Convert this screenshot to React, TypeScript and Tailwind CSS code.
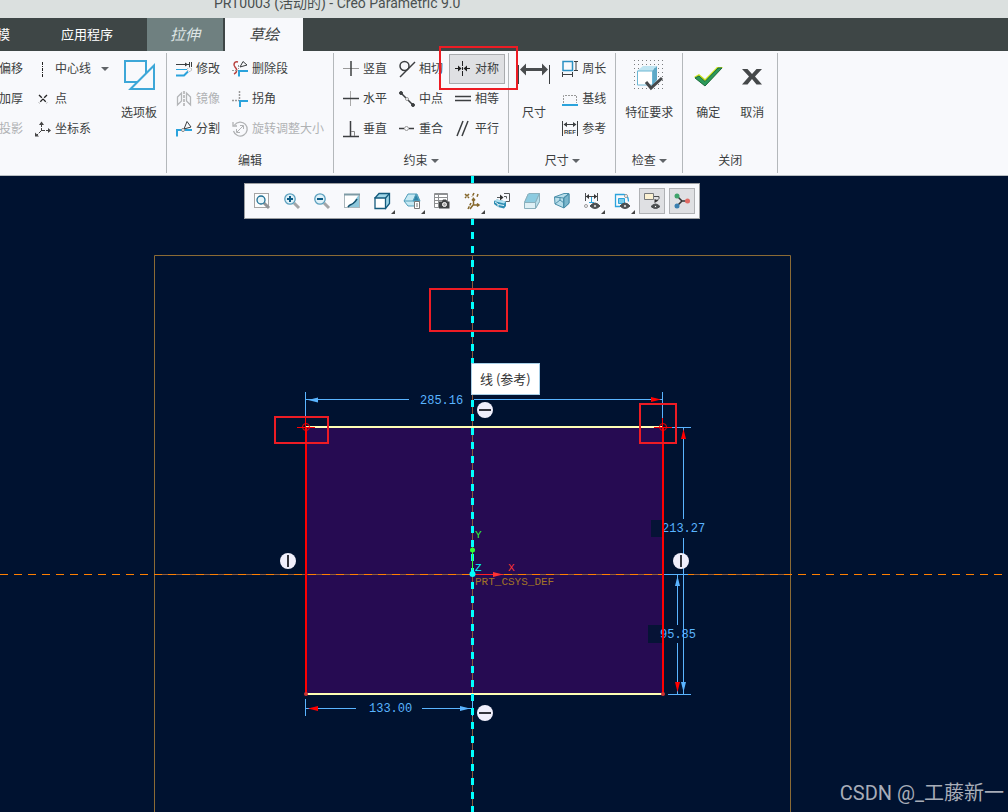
import { Fragment } from "react";
import type { ReactNode } from "react";

const INK = "#3c3f41";
const BLUE = "#2ba3dc";
const STEEL = "#1f6f94";
const DIM = "#5ab4ff";

const icons: Record<string, ReactNode> = {
  centerline: <path d="M7.500 1v15" stroke="#222" strokeDasharray="3 1 1 1" />,
  point: (
    <g stroke="#222">
      <path d="M4 4l8 8M12 4l-8 8" strokeWidth="1.300" strokeDasharray="4 1.500" />
    </g>
  ),
  csys: (
    <g stroke="#444">
      <path d="M6.500 3v7M7 9.500h6M6 10l-4 4" strokeDasharray="3 1" />
      <path d="M4 4l2.500-3.500L9 4zM13 7l3 2.500-3 2.500zM0 11.500v4h4z" fill="#444" stroke="none" />
    </g>
  ),
  modify: (
    <g stroke={INK}>
      <path d="M0 3.500h14M15.500 1v5M13.500 1v5" />
      <path d="M9 1.500l3 2-3 2z" fill={INK} stroke="none" />
      <path d="M0 8.500h11" stroke={BLUE} />
      <path d="M0 14.500h8l4-4" stroke={BLUE} strokeWidth="2" />
      <circle cx="13.500" cy="8.500" r="2" stroke="#999" strokeDasharray="1 1" />
    </g>
  ),
  mirror: (
    <g stroke="#b4b6b8">
      <path d="M1.500 6l4-4v8l-4 4zM14.500 6l-4-4v8l4 4z" strokeWidth="1.300" />
      <path d="M8 0v16" stroke="#888" strokeDasharray="3 1" />
    </g>
  ),
  divide: (
    <g stroke={INK}>
      <path d="M1 15.500V9h5M9 9h7" stroke={BLUE} strokeWidth="2" />
      <path d="M8 8l3-7.500 4 5.500zM6 10l3-3" />
      <circle cx="7" cy="9" r="1.500" fill="#fff" stroke="#888" />
    </g>
  ),
  deleteSegment: (
    <g stroke={INK}>
      <path d="M6 1c-4-1-5 3-3 5s3 5-1 7" stroke="#b8403c" strokeWidth="1.500" />
      <path d="M0 9.500h5M6.500 4v4" stroke="#999" strokeDasharray="2 1" />
      <path d="M7 15.500V10h9" stroke={BLUE} strokeWidth="2" />
      <path d="M8 6l3-5.500 4 3.500z" />
    </g>
  ),
  corner: (
    <g>
      <path d="M7.500 0v9M0 9.500h7" stroke="#999" strokeWidth="1.500" strokeDasharray="2 1" />
      <path d="M8 16v-6h8" stroke={BLUE} strokeWidth="2" />
    </g>
  ),
  rotateResize: (
    <g stroke="#b0b2b4">
      <path d="M2.500 4a7 7 0 1 1-1 6M1 1v4h4" strokeWidth="1.300" />
      <path d="M5 11l6-6M8 4.500h3.500V8M4.500 8v3.500H8" />
    </g>
  ),
  vertical: (
    <g>
      <path d="M0 7.500h16" stroke="#999" />
      <path d="M8 0v15" stroke={INK} strokeWidth="1.500" />
    </g>
  ),
  horizontal: (
    <g>
      <path d="M7.500 0v15" stroke="#aaa" />
      <path d="M0 7.500h16" stroke={INK} strokeWidth="1.500" />
    </g>
  ),
  perpendicular: (
    <g stroke={INK}>
      <path d="M7.500 0v15M0 15.500h16" strokeWidth="1.500" />
      <path d="M8 10.500h3.500V15" stroke="#888" />
    </g>
  ),
  tangent: (
    <g stroke={INK} strokeWidth="1.500">
      <circle cx="5.500" cy="5" r="4.500" />
      <path d="M1 16L16 1" />
    </g>
  ),
  midpoint: (
    <g stroke={INK}>
      <path d="M2 2l12 12" strokeWidth="1.500" />
      <circle cx="2" cy="2" r="1.500" fill={INK} />
      <circle cx="14" cy="14" r="1.500" fill={INK} />
      <circle cx="8" cy="8" r="1.500" fill="#fff" stroke="#999" />
    </g>
  ),
  coincident: (
    <g stroke={INK}>
      <path d="M0 7.500h5M10 7.500h5" strokeWidth="1.500" />
      <circle cx="7.500" cy="7.500" r="2" stroke="#999" />
    </g>
  ),
  symmetric: (
    <g stroke="#222">
      <path d="M7.500 0v16" strokeDasharray="5 1 3 1" />
      <path d="M0 7.500h4M11 7.500h4" />
      <path d="M3 4.500l3.500 3-3.500 3zM12 4.500l-3.500 3 3.500 3z" fill="#222" stroke="none" />
    </g>
  ),
  equal: <path d="M0 5.500h16M0 9.500h16" stroke={INK} strokeWidth="1.500" />,
  parallel: <path d="M2 15L8 0M7 15l6-15" stroke={INK} strokeWidth="1.500" />,
  perimeter: (
    <g stroke={INK}>
      <rect x="1" y="0.500" width="9.500" height="9" stroke="#2a90c2" strokeWidth="1.500" />
      <path d="M12 .5h4M12 9.500h4M14 1v8M.5 11v5M10.500 11v5M1 13.500h9" />
    </g>
  ),
  baseline: (
    <g>
      <path d="M1.500 12V4.500h13V12" stroke="#999" strokeDasharray="2 1" />
      <path d="M0 14h16" stroke={BLUE} strokeWidth="2" />
    </g>
  ),
  reference: (
    <g stroke={INK}>
      <path d="M.5 0v15M15.500 0v15M2 3.500h12" />
      <path d="M5 1L1.500 3.500 5 6zM11 1l3.500 2.500L11 6z" fill={INK} stroke="none" />
      <text x="2" y="13" fontSize="6" fontWeight="700" fill={INK} stroke="none" className="font-['Liberation_Sans']">
        REF
      </text>
    </g>
  ),

  // view toolbar
  refit: (
    <g>
      <rect x="0.500" y="0.500" width="14" height="14" fill="#fdfdfd" stroke="#a5a5a5" />
      <path d="M10 10l5 5" stroke="#909396" strokeWidth="3" />
      <circle cx="7" cy="7" r="4" fill="#e6f5fa" stroke={STEEL} strokeWidth="1.300" />
    </g>
  ),
  zoomIn: (
    <g>
      <path d="M10 10l5 5" stroke="#a3a5a7" strokeWidth="3" />
      <circle cx="6" cy="6" r="5.200" fill="#dff1f8" stroke="#5a9fbd" strokeWidth="1.300" />
      <path d="M3 6h6M6 3v6" stroke="#0d5c86" strokeWidth="2" />
    </g>
  ),
  zoomOut: (
    <g>
      <path d="M10 10l5 5" stroke="#a3a5a7" strokeWidth="3" />
      <circle cx="6" cy="6" r="5.200" fill="#dff1f8" stroke="#5a9fbd" strokeWidth="1.300" />
      <path d="M3 6h6" stroke="#0d5c86" strokeWidth="2" />
    </g>
  ),
  repaint: (
    <g>
      <rect x="0.500" y="1.500" width="15" height="13" fill="#fff" stroke="#a9b6bb" />
      <path d="M15 2v12H3C9 12 11 6 15 2z" fill="#8cc7db" />
      <path d="M0 1.500h16" stroke="#7d9aa5" strokeWidth="2" />
      <path d="M4 14c2-3 3-2 5-3.500S12 8 13 6" stroke="#134f6c" strokeWidth="1.500" />
    </g>
  ),
  displayStyle: (
    <g stroke="#145b7d" strokeWidth="1.300">
      <path d="M1 5l4-4.500h10.500v10l-4 5z" fill="#9fd6e8" />
      <path d="M1 5h10.500v10.500H1z" fill="#fff" />
      <path d="M11.500 5l4-4.500" />
    </g>
  ),
  savedViews: (
    <g stroke="#4f9dba">
      <path d="M0 8l4-7h9l3 7-4 5H4z" fill="#c6e9f3" />
      <path d="M9 8l3-7 3.500 7z" fill="#2d84a8" />
      <path d="M0 8h16" />
      <path d="M10.500 8.500h5v7h-5z" fill="#fff" stroke="#777" />
      <path d="M12 11h2M12 13h2" stroke="#777" />
    </g>
  ),
  viewManager: (
    <g stroke="#8d8f91">
      <path d="M.5.5h13v14H.5z" fill="#fff" />
      <path d="M0 1.500h14M1 4.500h12M1 7.500h12M1 10.500h12M4.500 1v13" />
      <path d="M5 8.500h3l1-2h3l1 2h2.500v7H5z" fill="#3f4244" stroke="none" />
      <circle cx="10.500" cy="11.500" r="2" fill="#aaa" stroke="#fff" />
    </g>
  ),
  datum: (
    <g stroke="#86682c" strokeWidth="1.500">
      <path d="M1 1l4 4M5 1L1 5M10 0L8 4M4 16l3-6M14 1l-1 3" strokeDasharray="3 1" />
      <path d="M9.500 6v6h5M9 12l-3 4M8 7.500l1.500-2 1.500 2M13 10.500l2 1.500-2 1.500" />
    </g>
  ),
  annotation: (
    <g>
      <path d="M3 4.500h4M10 .5h5.500v8H11M10 3.500h2.500v2" stroke="#55585a" />
      <path d="M6 1.500l3.500 3L6 7.500z" fill="#333" />
      <path d="M0 8l3-1.500 9 2V13l-2 2.500-6-1.500-4-3z" fill="#2e8db3" />
      <path d="M0 8l3-1.500 9 2-2 2z" fill="#b4e2f0" />
      <path d="M1 9l3 2v3M4 11.500l6 1" stroke="#e8f6fa" />
    </g>
  ),
  shading: (
    <g stroke="#8ab0bd">
      <path d="M.5 9.500L4 1.500q.5-1 2-1h9.500v8l-4 7H.5z" fill="#dff0f5" />
      <path d="M.5 9.500L4 1.500q.5-1 2-1h9.500l-4 9z" fill="#8ccbe0" />
      <path d="M11.500 9.500l4-9v8l-4 7z" fill="#b9dfeb" />
    </g>
  ),
  perspective: (
    <g stroke="#4b8faa">
      <path d="M.5 4L10 .5h5v10L10 15 1 11z" fill="#b8deea" />
      <path d="M.5 4l9 1 5.500-4.500-5.500 4.500V15M1 11l5-4 4 3M6 7V4" />
      <path d="M10 5l5-4v9l-5 5z" fill="#7ab6cc" />
    </g>
  ),
  dimDisplay: (
    <g stroke="#4a4d4f">
      <path d="M1.500 0v8M13.500 0v8M2 3.500h11" />
      <path d="M5 1L2 3.500 5 6zM10 1l3 2.500L10 6z" fill="#333" stroke="none" />
      <path d="M7.500 4v5M5 9.500h5" stroke={BLUE} />
      <circle cx="2" cy="13" r="1.500" stroke="#999" />
      <path d="M6 13q5-6 10 0-5 5-10 0z" fill="#4a4d4f" />
      <circle cx="11" cy="13" r="1.500" fill="#fff" />
    </g>
  ),
  sketchDisplay: (
    <g stroke="#4a4d4f">
      <path d="M6 13.500H1.500V1.500H10q4.500 1 4.500 7" stroke={BLUE} strokeWidth="1.300" />
      <path d="M4.500 5.500h6v5h-6z" fill="#7bcdea" stroke={BLUE} />
      <circle cx="12" cy="3" r="1.500" fill="#fff" stroke="#999" />
      <path d="M6 13q5-6 10 0-5 5-10 0z" fill="#4a4d4f" />
      <circle cx="11" cy="13" r="1.500" fill="#fff" />
    </g>
  ),
  noteDisplay: (
    <g stroke="#4a4d4f">
      <path d="M.5.5h9v6h-9z" fill="#fbf1d2" stroke="#77797b" />
      <path d="M10 3.500h5v2l-2 2" />
      <path d="M10.500 6v4l4-2.500z" fill="#333" stroke="none" />
      <path d="M7 13.500q4.500-5 9 0-4.500 4-9 0z" fill="#4a4d4f" />
      <circle cx="11.500" cy="13.500" r="1" fill="#fff" />
    </g>
  ),
  spinCenter: (
    <g>
      <path d="M3 3l5 5M3 13l5-5h6" stroke="#333" strokeWidth="1.500" />
      <circle cx="3" cy="3" r="2.500" fill="#3fa36b" />
      <circle cx="3" cy="13" r="2.500" fill="#3a7fb0" />
      <circle cx="13.500" cy="8" r="2.500" fill="#e06a63" />
    </g>
  ),
};

const Icon = ({ name }: { name: string }) => (
  <svg viewBox="0 0 16 16" fill="none" className="size-4 shrink-0 overflow-visible" aria-hidden="true">
    {icons[name]}
  </svg>
);

const Caret = () => (
  <svg viewBox="0 0 8 4" className="h-1 w-2 shrink-0" aria-hidden="true">
    <path d="M0 0h8L4 4z" fill="#606468" />
  </svg>
);

type Command = { label: string; icon?: string; disabled?: boolean; menu?: boolean; active?: boolean };

const CommandButton = ({ label, icon, disabled, menu, active }: Command) => (
  <div className="relative flex h-[30px] items-center">
    <button
      type="button"
      disabled={disabled}
      aria-pressed={active}
      className={
        active
          ? "-mx-1.5 flex h-[30px] items-center gap-1 border border-[#a9abae] bg-[#dfe0e3] px-[5px] whitespace-nowrap"
          : "flex items-center gap-1 whitespace-nowrap disabled:text-[#b0b2b4]"
      }
    >
      {icon && <Icon name={icon} />}
      {label}
      {menu && (
        <span className="ml-1.5">
          <Caret />
        </span>
      )}
    </button>
    {active && <span className="pointer-events-none absolute -top-2 -right-[19px] -bottom-1.5 -left-4 z-10 border-2 border-[#ed1c24]" />}
  </div>
);

const CommandColumn = ({ items }: { items: Command[] }) => (
  <div className="flex shrink-0 flex-col items-start">
    {items.map((item) => (
      <CommandButton key={item.label} {...item} />
    ))}
  </div>
);

const BigButton = ({ label, children }: { label: string; children: ReactNode }) => (
  <button type="button" className="flex h-[90px] shrink-0 flex-col items-center gap-[11px] pt-[3px] whitespace-nowrap">
    <svg viewBox="0 0 36 36" fill="none" className="-mx-1.5 size-9" aria-hidden="true">
      {children}
    </svg>
    <span className="leading-[18px]">{label}</span>
  </button>
);

type GroupProps = { label?: string; menu?: boolean; children: ReactNode };

const Group = ({ label, menu, children }: GroupProps) => (
  <section className="flex shrink-0 flex-col border-r border-[#b4b8bb]">
    <div className="flex gap-3 px-[9px] pt-px">{children}</div>
    <div className="flex h-[34px] shrink-0 items-center justify-center gap-[3px]">
      {label}
      {menu && <Caret />}
    </div>
  </section>
);

const gridDots = [0, 1, 2, 3, 4, 5, 6, 7].flatMap((row) => [0, 1, 2, 3, 4, 5, 6, 7].map((col) => [3 + col * 4, 3 + row * 4]));

const Ribbon = () => (
  <div className="relative z-10 flex h-[125px] overflow-x-clip border-b border-[#b9bfc3] bg-[#f8f9fc] pt-0.5 pb-0.5 text-xs text-[#3c3f41]">
    <Group>
      <div className="-ml-2.5">
        <CommandColumn items={[{ label: "偏移" }, { label: "加厚" }, { label: "投影", disabled: true }]} />
      </div>
      <CommandColumn
        items={[
          { label: "中心线", icon: "centerline", menu: true },
          { label: "点", icon: "point" },
          { label: "坐标系", icon: "csys" },
        ]}
      />
      <BigButton label="选项板">
        <path d="M4 4h21v21H4z" stroke="#3da7d8" strokeWidth="2" fill="#f8f9fc" />
        <path d="M9.500 32L33 8.500V32z" stroke="#3da7d8" strokeWidth="2" fill="#f8f9fc" />
      </BigButton>
    </Group>
    <Group label="编辑">
      <CommandColumn
        items={[
          { label: "修改", icon: "modify" },
          { label: "镜像", icon: "mirror", disabled: true },
          { label: "分割", icon: "divide" },
        ]}
      />
      <CommandColumn
        items={[
          { label: "删除段", icon: "deleteSegment" },
          { label: "拐角", icon: "corner" },
          { label: "旋转调整大小", icon: "rotateResize", disabled: true },
        ]}
      />
    </Group>
    <Group label="约束" menu>
      <CommandColumn
        items={[
          { label: "竖直", icon: "vertical" },
          { label: "水平", icon: "horizontal" },
          { label: "垂直", icon: "perpendicular" },
        ]}
      />
      <CommandColumn
        items={[
          { label: "相切", icon: "tangent" },
          { label: "中点", icon: "midpoint" },
          { label: "重合", icon: "coincident" },
        ]}
      />
      <CommandColumn
        items={[
          { label: "对称", icon: "symmetric", active: true },
          { label: "相等", icon: "equal" },
          { label: "平行", icon: "parallel" },
        ]}
      />
    </Group>
    <Group label="尺寸" menu>
      <div className="flex w-8 justify-center">
        <BigButton label="尺寸">
          <path d="M2.500 8v19M33.500 8v19" stroke={INK} />
          <path d="M8 12.500h20" stroke="#4a4d4f" strokeWidth="3" />
          <path d="M4 12.500l6-6v12zM32 12.500l-6-6v12z" fill="#4a4d4f" />
        </BigButton>
      </div>
      <CommandColumn
        items={[
          { label: "周长", icon: "perimeter" },
          { label: "基线", icon: "baseline" },
          { label: "参考", icon: "reference" },
        ]}
      />
    </Group>
    <Group label="检查" menu>
      <BigButton label="特征要求">
        {gridDots.map(([x, y]) => (
          <rect key={`${x}-${y}`} x={x} y={y} width="1" height="1" fill="#7b7e80" />
        ))}
        <path d="M6 14l6-5h14l-5 5z" fill="#bfe5f2" />
        <path d="M21 14l5-5v14l-5 6z" fill="#5fa9c7" />
        <path d="M6.500 14h15v14h-15z" fill="#fff" stroke="#6db7d3" />
        <path d="M15 25l5 6L31 21" stroke="#45484a" strokeWidth="3" />
      </BigButton>
    </Group>
    <Group label="关闭">
      <div className="flex gap-5 px-1">
        <BigButton label="确定">
          <path d="M4 20l5-3 6 5L27 10h6L15 29z" fill="#c9e21c" />
          <path d="M5 21l4-2 6 5.500L28 11h4L15 29z" fill="#2c9a5b" stroke="#1d6b43" />
        </BigButton>
        <BigButton label="取消">
          <path d="M8 12h5.500l4.500 5 4.500-5H28l-7 7.500 7 8h-5.500L18 22l-4.500 5.500H8l7-8z" fill="#45484a" />
        </BigButton>
      </div>
    </Group>
  </div>
);

const viewTools = [
  { name: "refit", title: "重新调整" },
  { name: "zoomIn", title: "放大" },
  { name: "zoomOut", title: "缩小" },
  { name: "repaint", title: "重画" },
  { name: "displayStyle", title: "显示样式", menu: true },
  { name: "savedViews", title: "已保存方向", menu: true },
  { name: "viewManager", title: "视图管理器" },
  { name: "datum", title: "基准显示", menu: true },
  { name: "annotation", title: "草绘视图" },
  { name: "shading", title: "透明" },
  { name: "perspective", title: "透视图" },
  { name: "dimDisplay", title: "尺寸显示", menu: true },
  { name: "sketchDisplay", title: "草绘器显示", menu: true },
  { name: "noteDisplay", title: "注释显示", active: true },
  { name: "spinCenter", title: "旋转中心", active: true },
];

const ViewToolbar = () => (
  <div className="absolute top-[7px] left-[244px] flex gap-1 border border-[#9b9ea1] bg-[#f8f9fc] p-1" role="toolbar">
    {viewTools.map(({ name, title, menu, active }) => (
      <button
        key={name}
        type="button"
        aria-label={title}
        className={
          active
            ? "relative flex size-[26px] items-center justify-center border border-[#b0b2b5] bg-[#dfe0e3]"
            : "relative flex size-[26px] items-center justify-center"
        }
      >
        <Icon name={name} />
        {menu && (
          <svg viewBox="0 0 4 4" className="absolute right-0 bottom-0 size-1" aria-hidden="true">
            <path d="M4 0v4H0z" fill="#444" />
          </svg>
        )}
      </button>
    ))}
  </div>
);

const Badge = ({ x, y, vertical }: { x: number; y: number; vertical?: boolean }) => (
  <g>
    <circle cx={x} cy={y} r="8" fill="#f0effc" />
    <path d={vertical ? `M${x} ${y - 6}v12` : `M${x - 6} ${y}h12`} stroke="#33343c" strokeWidth="2" />
  </g>
);

const dimensions = [
  { text: "285.16", x: 420, y: 404 },
  { text: "133.00", x: 369, y: 712 },
  { text: "213.27", x: 662, y: 532 },
  { text: "95.85", x: 660, y: 638 },
];

const highlights = [
  { x: 430, y: 289, w: 77, h: 42 },
  { x: 275, y: 417, w: 53, h: 26 },
  { x: 640, y: 404, w: 36, h: 39 },
];

const Sketch = () => (
  <svg className="absolute inset-0 h-full w-full font-['Liberation_Mono',monospace]" fill="none">
    {/* coordinates are window pixels, the canvas starts below the ribbon */}
    <g transform="translate(0 -176)">
      <path d="M154.500 1200V255.500h636V1200" stroke="#8a6a35" />
      <rect x="306" y="427" width="357" height="267" fill="#260b52" />
      <path d="M154 574.500h636" stroke="#8c5a3c" />
      <path d="M0 574.500h4000" stroke="#ff7f00" strokeDasharray="8 6" />
      <path d="M472.500 255v900" stroke="#8c5a3c" />

      {/* dimension lines */}
      <g stroke={DIM}>
        <path d="M305.500 392v35M662.500 392v35M306 399.500h103M502 399.500h160M474 399.500h30" />
        <path d="M305.500 699v17M472.500 699v17M306 708.500h50M422 708.500h50" />
        <path d="M663 427.500h28M668 694.500h23M664 574.500h24M683.500 428v91M683.500 538v156M677.500 575v50M677.500 643v51" />
      </g>
      <g fill={DIM}>
        <path d="M308 400l10-2.500v5zM470 708.500l-10-2.500v5zM677.500 576l-2.500 10h5zM683.500 692l-2.500-10h5z" />
      </g>
      <path d="M661 399.500l-10-2.500v5zM308 708.500l10-2.500v5zM683.500 429l-2.500 10h5zM677.500 692l-2.500-10h5z" fill="#f00" />
      <path d="M651 520h11v17h-11zM648 625h14v18h-14z" fill="#061336" />
      {dimensions.map((d) => (
        <text key={d.text} x={d.x} y={d.y} fontSize="12" fill={DIM}>
          {d.text}
        </text>
      ))}

      <path d="M306 427h357M306 694h357" stroke="#ffffb4" strokeWidth="2" />
      <path d="M306 427v267M663 427v267" stroke="#f00" strokeWidth="2" />
      {[306, 663].map((x) => (
        <Fragment key={x}>
          <circle cx={x} cy="427" r="3.500" stroke="#f00" />
          <path d={`M${x - 9} 427.500h18M${x - 0.5} 418v9`} stroke="#f00" />
          <circle cx={x} cy="694" r="2" fill="#c33" />
        </Fragment>
      ))}

      <path d="M472.500 176v2000" stroke="#0ff" strokeWidth="3" strokeDasharray="7 7" />

      {/* coordinate system */}
      <path d="M472.500 550v20" stroke="#3f3" />
      <circle cx="472.500" cy="550" r="2.500" fill="#3f3" />
      <path d="M475 574.500h28" stroke="#f22" />
      <path d="M493 572v5l10-2.500z" fill="#f33" />
      <circle cx="472.500" cy="574" r="3" fill="#0ff" />
      <text x="475" y="538" fontSize="11" fill="#3f3">Y</text>
      <text x="475" y="571" fontSize="11" fill="#0ff">Z</text>
      <text x="508" y="571" fontSize="11" fill="#f33">X</text>
      <text x="475" y="585" fontSize="11" fill="#a27428">PRT_CSYS_DEF</text>

      <Badge x={485} y={410} />
      <Badge x={485} y={713} />
      <Badge x={288} y={561} vertical />
      <Badge x={681} y={561} vertical />

      {highlights.map((h) => (
        <rect key={h.x} x={h.x} y={h.y} width={h.w} height={h.h} stroke="#ed1c24" strokeWidth="2" />
      ))}
    </g>
  </svg>
);

const App = () => (
  <div className="flex min-h-screen flex-col font-['Noto_Sans','Noto_Sans_CJK_SC',sans-serif]">
    <header className="h-[18px] overflow-hidden bg-[#dbe0df] pl-[214px] font-['Roboto','Noto_Sans_CJK_SC',sans-serif] text-sm text-[#4a5050]">
      <h1 className="-mt-2 leading-[22px] whitespace-nowrap">PRT0003 (活动的) - Creo Parametric 9.0</h1>
    </header>

    <nav className="flex h-[33px] overflow-hidden bg-[#3e4646] text-[13px] text-white">
      <button type="button" className="-ml-[3px] pr-[17px]">模</button>
      <button type="button" className="px-[34px] whitespace-nowrap">应用程序</button>
      <button type="button" className="w-[76px] bg-[#6f8080] text-[15px] text-[#dfe6e6] italic">拉伸</button>
      <button type="button" className="ml-0.5 w-[78px] bg-[#f8f9fc] text-[15px] text-[#3c3f41] italic">草绘</button>
    </nav>

    <Ribbon />

    <main className="relative flex-1 overflow-hidden bg-[#001230]">
      <Sketch />
      <ViewToolbar />
      <div role="tooltip" className="absolute top-[187px] left-[471px] border border-[#a9cfe6] bg-white px-2 font-['Noto_Sans_CJK_SC',sans-serif] text-[13px] leading-[30px] text-[#333]">
        线 (参考)
      </div>
      <p className="absolute right-1 bottom-1 font-['Roboto','Noto_Sans_CJK_SC',sans-serif] text-xl leading-[30px] text-[#a8adb8]">
        CSDN @_工藤新一
      </p>
    </main>
  </div>
);

export default App;
